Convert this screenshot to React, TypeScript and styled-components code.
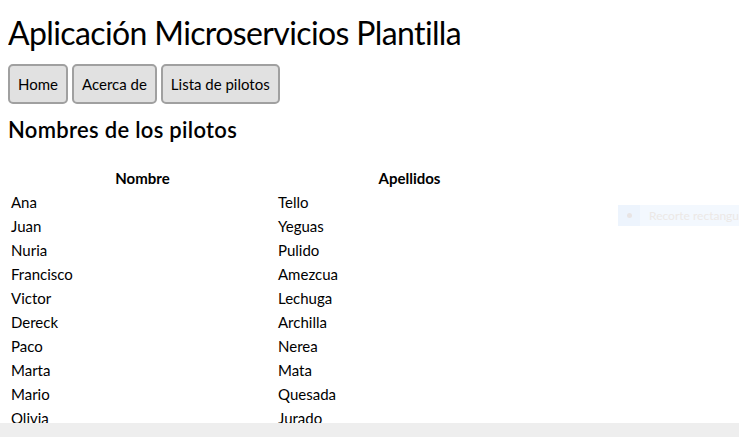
import React from "react";
import styled, { createGlobalStyle } from "styled-components";

const Global = createGlobalStyle`
  html, body { margin: 0; padding: 0; background: #fff; }
  body {
    margin: 8px;
    font-family: Lato, "Liberation Sans", sans-serif;
    color: #000;
    overflow: hidden;
  }
`;

const Title = styled.h1`
  font-size: 32px;
  font-weight: 400;
  margin: 5px 0 11px;
  line-height: 40px;
  letter-spacing: -0.62px;
`;

const Nav = styled.nav`
  display: flex;
  gap: 4px;
`;

const NavButton = styled.button`
  font-family: inherit;
  font-size: 15px;
  color: #000;
  background: #e1e1e1;
  border: 2px solid #a0a0a0;
  border-radius: 5px;
  height: 40px;
  padding: 0 8px;
`;

const Subtitle = styled.h2`
  font-size: 22px;
  font-weight: 600;
  margin: 12px 0 22px;
  line-height: 28px;
  letter-spacing: 0.3px;
`;

const Table = styled.table`
  width: 536px;
  border-spacing: 2px;
  font-size: 15px;
`;

const Th = styled.th`
  width: 50%;
  padding: 1px;
  line-height: 19px;
  font-weight: 700;
  text-align: center;
`;

const Td = styled.td`
  padding: 1px;
  line-height: 20px;
  text-align: left;
`;

const BottomBar = styled.div`
  position: fixed;
  left: 0;
  right: 0;
  bottom: 0;
  height: 14px;
  background: #eeeeee;
`;

const Snip = styled.div`
  position: fixed;
  left: 618px;
  top: 205px;
  width: 121px;
  height: 21px;
  overflow: hidden;
  background: #f3f8fe;
  display: flex;
  align-items: center;
  font-size: 12px;
  color: #ece8e6;
  white-space: nowrap;
`;

const SnipIcon = styled.span`
  width: 22px;
  flex: none;
  align-self: stretch;
  background: #edf4fd;
  display: flex;
  align-items: center;
  justify-content: center;
  margin-right: 9px;
  &::before {
    content: "";
    width: 5px;
    height: 5px;
    border-radius: 50%;
    background: #e8e4e4;
  }
`;

const pilots: [string, string][] = [
  ["Ana", "Tello"],
  ["Juan", "Yeguas"],
  ["Nuria", "Pulido"],
  ["Francisco", "Amezcua"],
  ["Victor", "Lechuga"],
  ["Dereck", "Archilla"],
  ["Paco", "Nerea"],
  ["Marta", "Mata"],
  ["Mario", "Quesada"],
  ["Olivia", "Jurado"],
];

export default function App() {
  return (
    <>
      <Global />
      <Title>Aplicación Microservicios Plantilla</Title>
      <Nav>
        <NavButton>Home</NavButton>
        <NavButton>Acerca de</NavButton>
        <NavButton>Lista de pilotos</NavButton>
      </Nav>
      <Subtitle>Nombres de los pilotos</Subtitle>
      <Table>
        <thead>
          <tr>
            <Th>Nombre</Th>
            <Th>Apellidos</Th>
          </tr>
        </thead>
        <tbody>
          {pilots.map(([n, a]) => (
            <tr key={n}>
              <Td>{n}</Td>
              <Td>{a}</Td>
            </tr>
          ))}
        </tbody>
      </Table>
      <Snip>
        <SnipIcon />
        Recorte rectangular
      </Snip>
      <BottomBar />
    </>
  );
}
